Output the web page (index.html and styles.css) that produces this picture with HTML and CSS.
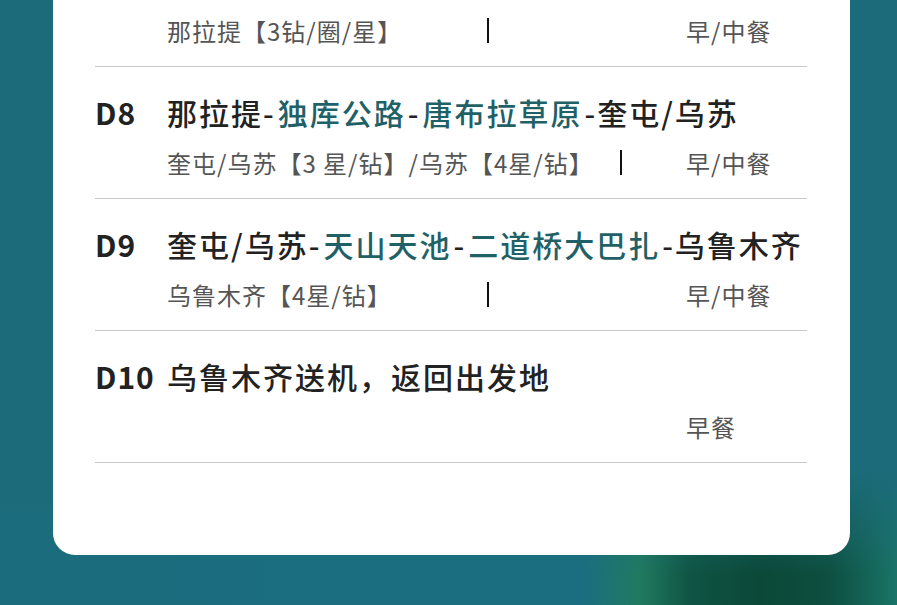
FILE: index.html
```html
<!DOCTYPE html>
<html lang="zh-CN">
<head>
    <meta charset="UTF-8">
    <meta name="viewport" content="width=device-width, initial-scale=1.0">
    <title>行程安排</title>
    <link rel="stylesheet" href="styles.css">
</head>
<body>
    <div class="page">
        <div class="card">
            <!-- D7: only the hotel line is visible at the top -->
            <div class="day day-cut">
                <div class="day-info">
                    <span class="hotel">那拉提【3钻/圈/星】</span>
                    <span class="bar"></span>
                    <span class="meals">早/中餐</span>
                </div>
            </div>

            <div class="day">
                <div class="day-title">
                    <span class="day-no">D8</span>
                    <span class="route">那拉提-<em>独库公路</em>-<em>唐布拉草原</em>-奎屯/乌苏</span>
                </div>
                <div class="day-info">
                    <span class="hotel">奎屯/乌苏【3 星/钻】/乌苏【4星/钻】</span>
                    <span class="bar"></span>
                    <span class="meals">早/中餐</span>
                </div>
            </div>

            <div class="day">
                <div class="day-title">
                    <span class="day-no">D9</span>
                    <span class="route">奎屯/乌苏-<em>天山天池</em>-<em>二道桥大巴扎</em>-乌鲁木齐</span>
                </div>
                <div class="day-info">
                    <span class="hotel">乌鲁木齐【4星/钻】</span>
                    <span class="bar"></span>
                    <span class="meals">早/中餐</span>
                </div>
            </div>

            <div class="day">
                <div class="day-title">
                    <span class="day-no">D10</span>
                    <span class="route">乌鲁木齐送机，返回出发地</span>
                </div>
                <div class="day-info">
                    <span class="meals">早餐</span>
                </div>
            </div>
        </div>
    </div>
</body>
</html>
```

FILE: styles.css
```css
html, body {
    margin: 0;
    padding: 0;
    height: 100%;
    overflow: hidden;
}
body {
    font-family: "Noto Sans CJK SC", "Noto Sans", sans-serif;
    color: #222;
    background:
        linear-gradient(to bottom, #1b6b7a 0, #1b6b7a 470px, rgba(27, 107, 122, 0) 575px),
        linear-gradient(to right, #1b6d7e 0, #1b6e7f 585px, #207a60 640px, #0f5444 690px, #0b4838 760px, #0d4f40 830px, #1a7468 897px);
}
.page {
    box-sizing: border-box;
    height: 100vh;
    display: flex;
    flex-direction: column;
    justify-content: flex-end;
    padding: 0 47px 50px 53px;
}
.card {
    flex-shrink: 0;
    background: #fff;
    border-radius: 0 0 22px 22px;
    padding: 0 43px 92px 42px;
}
.day {
    padding: 27px 0 21px;
    border-bottom: 1px solid #c8c8c8;
}
.day-cut {
    padding-top: 0;
}
.day-title {
    display: flex;
    height: 36px;
    line-height: 36px;
    font-size: 30px;
    font-weight: 500;
    letter-spacing: 2px;
    white-space: nowrap;
}
.day-no {
    width: 72px;
    flex-shrink: 0;
    font-weight: bold;
    letter-spacing: 1px;
}
.route em {
    font-style: normal;
    color: #1f6166;
    margin: 0 2px;
}
.day-info {
    display: flex;
    align-items: center;
    height: 30px;
    margin-top: 17px;
    margin-left: 72px;
    font-size: 24px;
    letter-spacing: 1px;
    color: #555;
    white-space: nowrap;
}
.hotel {
    min-width: 294px;
    padding-right: 26px;
}
.bar {
    width: 2px;
    height: 25px;
    background: #111;
}
.meals {
    margin-left: auto;
    width: 121px;
}
```
